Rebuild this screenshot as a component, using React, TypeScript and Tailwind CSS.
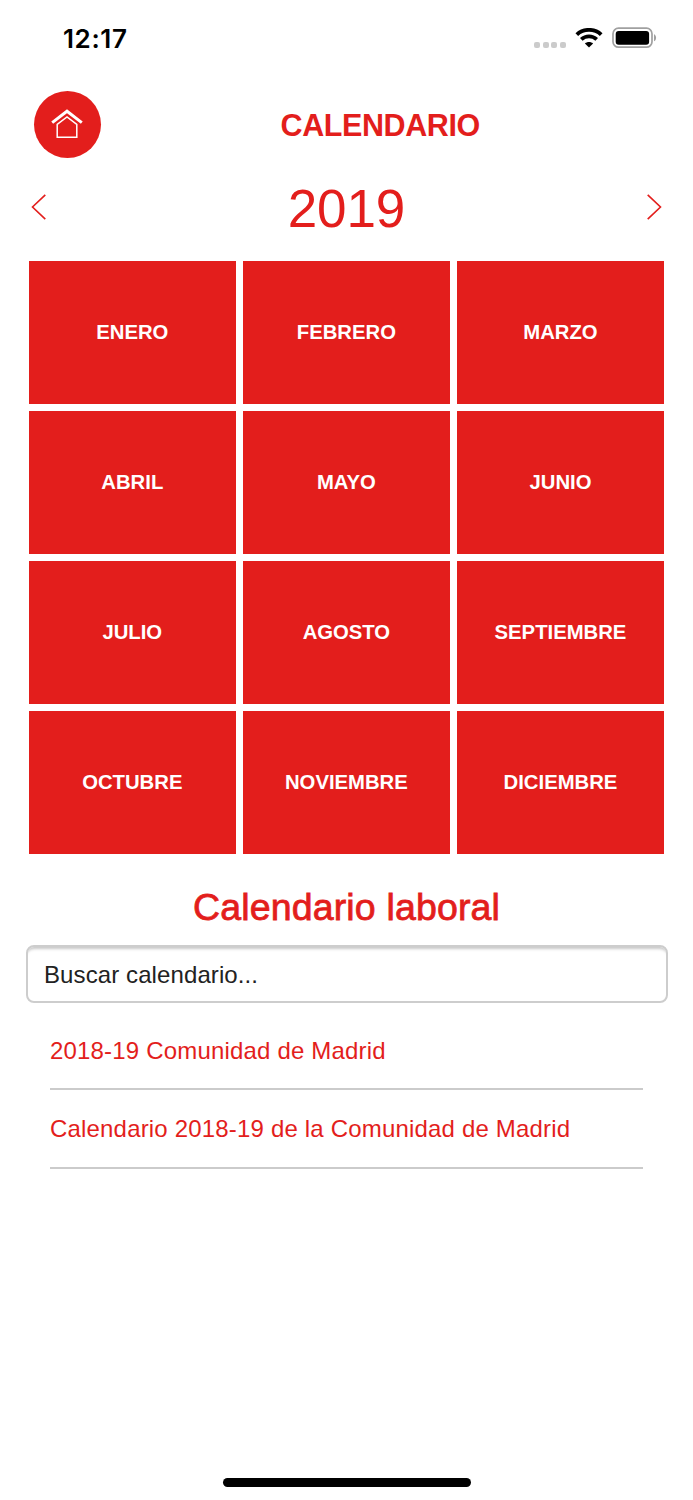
const months = [
  'ENERO', 'FEBRERO', 'MARZO',
  'ABRIL', 'MAYO', 'JUNIO',
  'JULIO', 'AGOSTO', 'SEPTIEMBRE',
  'OCTUBRE', 'NOVIEMBRE', 'DICIEMBRE',
]

const calendars = [
  '2018-19 Comunidad de Madrid',
  'Calendario 2018-19 de la Comunidad de Madrid',
]

function StatusBar() {
  return (
    <div className="flex h-[76px] items-center justify-between pl-[63px] pr-9 text-black">
      <span className="mt-px font-['Inter',sans-serif] text-[26px] font-semibold leading-8 tracking-[0.6px]">12:17</span>
      <div className="flex items-center">
        <div className="mr-[9px] mt-[14px] flex gap-[2.6px]">
          {[0, 1, 2, 3].map((i) => (
            <span key={i} className="h-[6px] w-[6px] rounded-[2px] bg-[#cbcbcb]" />
          ))}
        </div>
        <svg className="mr-[9px]" width="28" height="20" viewBox="0 0 28 20" fill="none" stroke="#000" strokeWidth="3.9">
          <path d="M1.8 6.6 C8.6 0.3 19.4 0.3 26.2 6.6" />
          <path d="M6.3 11.4 C10.7 7.4 17.3 7.4 21.7 11.4" />
          <path d="M14 19.6 L9.9 15.5 C12.2 13.5 15.8 13.5 18.1 15.5 Z" fill="#000" stroke="none" />
        </svg>
        <svg width="45" height="22" viewBox="0 0 45 22">
          <rect x="1" y="1.2" width="39" height="19" rx="5.5" fill="none" stroke="#a0a0a0" strokeWidth="1.7" />
          <rect x="3.7" y="3.9" width="33.4" height="13.8" rx="3" fill="#000" />
          <path d="M42 7.2 C44.8 8.2 44.8 13.2 42 14.2 Z" fill="#a0a0a0" />
        </svg>
      </div>
    </div>
  )
}

function Header() {
  return (
    <header className="flex h-[96px] items-center pl-[33.5px]">
      <button className="flex h-[67px] w-[67px] items-center justify-center rounded-full bg-[#e31e1c]">
        <svg width="32" height="30" viewBox="0 0 32 30" fill="none" stroke="#fff">
          <path d="M1.2 13.6 L16 2.2 L30.8 13.6" strokeWidth="3" />
          <path d="M6.2 28.3 V15.4 L16 7.9 L25.8 15.4 V28.3 Z" strokeWidth="1.5" />
        </svg>
      </button>
      <h1 className="ml-[180px] mt-[2px] text-[30.5px] font-bold leading-9 tracking-[-0.4px]">CALENDARIO</h1>
    </header>
  )
}

function YearPicker() {
  return (
    <div className="flex h-[89px] items-center justify-between px-[31px] pb-[20px]">
      <svg width="16" height="26" viewBox="0 0 16 26" fill="none" stroke="currentColor" strokeWidth="1.6">
        <path d="M14.3 0.8 L1.5 13 L14.3 25.2" />
      </svg>
      <span className="mt-[5px] text-[53px] leading-[60px] tracking-[-0.1px]">2019</span>
      <svg width="16" height="26" viewBox="0 0 16 26" fill="none" stroke="currentColor" strokeWidth="1.6">
        <path d="M1.7 0.8 L14.5 13 L1.7 25.2" />
      </svg>
    </div>
  )
}

export default function App() {
  return (
    <div className="flex h-[1500px] w-[693px] flex-col bg-white font-['Liberation_Sans',Arial,sans-serif] text-[#e31e1c]">
      <StatusBar />
      <Header />
      <YearPicker />

      <div className="ml-[28.6px] grid w-[635.6px] grid-cols-3 gap-[6.7px]">
        {months.map((month) => (
          <button
            key={month}
            className="flex h-[143.2px] items-center justify-center bg-[#e31e1c] text-[20.3px] font-bold text-white"
          >
            {month}
          </button>
        ))}
      </div>

      <h2 className="mt-[31px] text-center text-[37.5px] leading-[44px] tracking-[0.15px] [-webkit-text-stroke:0.8px_#e31e1c]">
        Calendario laboral
      </h2>

      <input
        type="text"
        placeholder="Buscar calendario..."
        className="mx-[25.5px] mt-[16px] h-[58px] rounded-[8px] border-2 border-[#cdcdcd] px-[16.5px] pt-[3px] text-[24px] tracking-[0.1px] text-[#222] shadow-[inset_0_5px_3px_-3px_#c8c8c8] outline-none placeholder:text-[#222]"
      />

      <ul className="mx-[50px] mt-[9px] text-[24px] tracking-[0.18px]">
        {calendars.map((title) => (
          <li key={title} className="flex h-[78.5px] items-center border-b-2 border-[#cbcbcb] pt-px">
            {title}
          </li>
        ))}
      </ul>

      {/* Home indicator */}
      <div className="mb-[13.5px] mt-auto h-[9px] w-[248px] self-center rounded-full bg-black" />
    </div>
  )
}
